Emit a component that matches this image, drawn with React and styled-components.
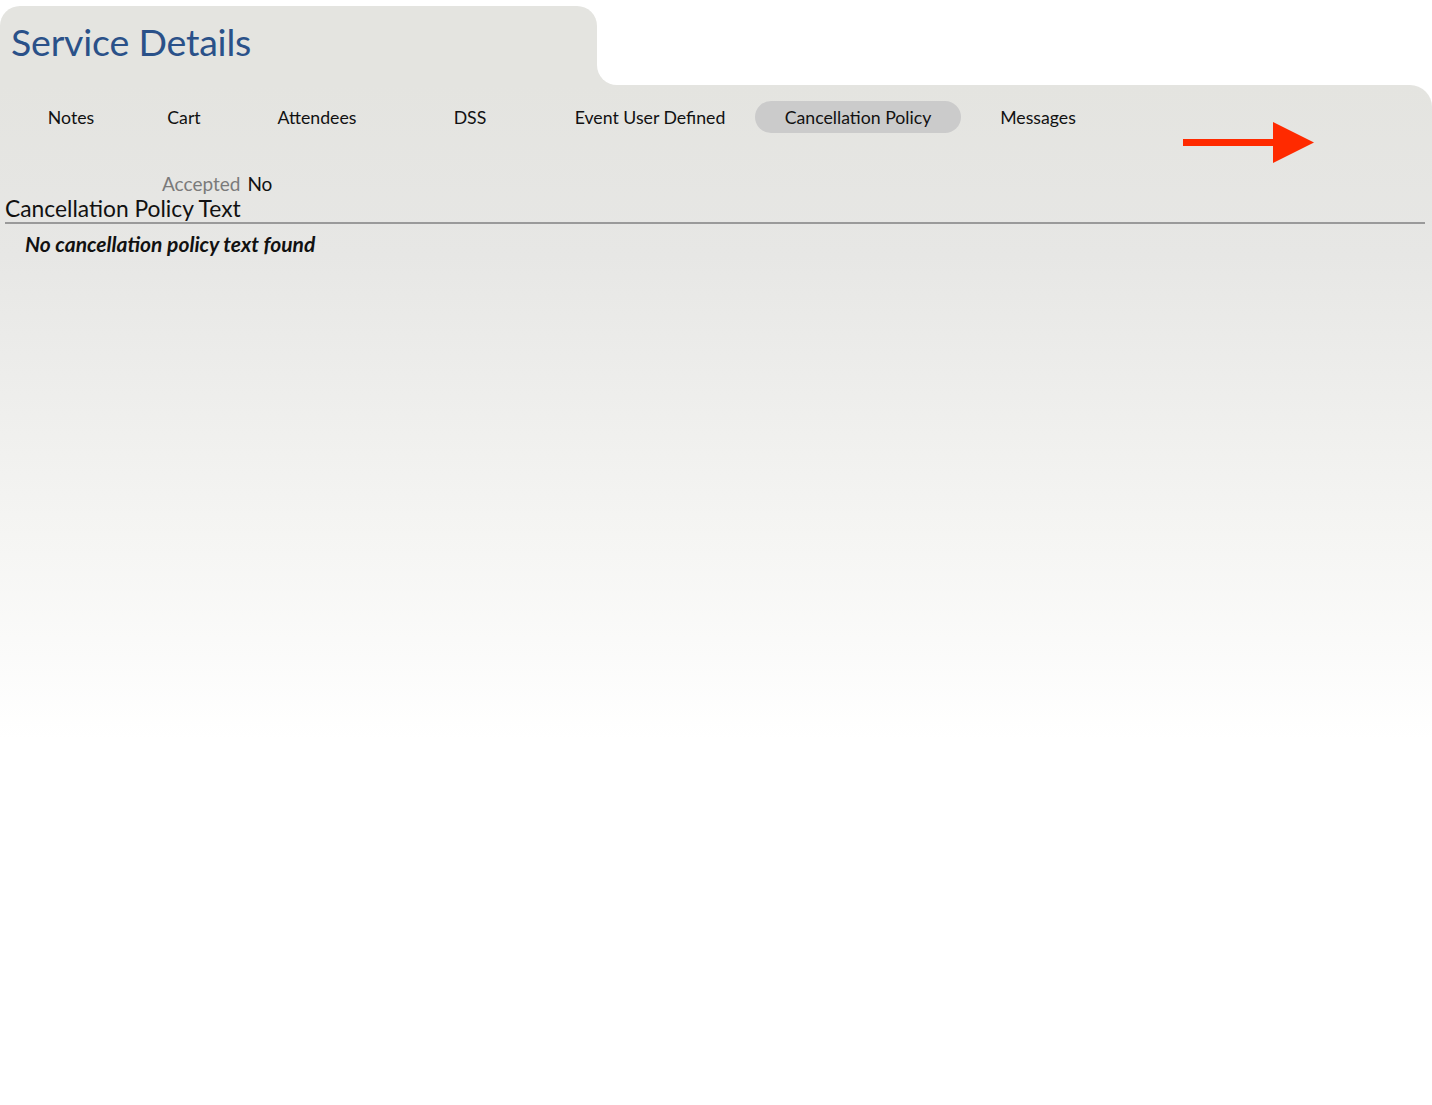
import React from "react";
import styled, { createGlobalStyle } from "styled-components";

const Global = createGlobalStyle`
  html, body { margin: 0; padding: 0; background: #fff; }
  body { font-family: Lato, "Open Sans", sans-serif; color: #111; }
`;

const Page = styled.div`
  padding-top: 6px;
  min-height: 1099px;
  display: flex;
  flex-direction: column;
`;

const HeaderRow = styled.div`
  display: flex;
  height: 79px;
`;

const HeaderTab = styled.div`
  width: 597px;
  background: #e4e4e0;
  border-radius: 20px 20px 0 0;
  padding: 13px 0 0 11px;
  box-sizing: border-box;
`;

const Title = styled.h1`
  margin: 0;
  font-family: Lato, sans-serif;
  font-weight: 400;
  font-size: 37.5px;
  line-height: 46px;
  color: #2a5189;
  letter-spacing: -0.2px;
`;

const CornerWrap = styled.div`
  flex: 1;
  background: #e4e4e0;
`;

const CornerFill = styled.div`
  height: 100%;
  background: #fff;
  border-bottom-left-radius: 20px;
`;

const Body = styled.div`
  position: relative;
  flex: 1;
  background: linear-gradient(to bottom, #e4e4e0 0px, #e7e7e5 170px, #f6f6f4 470px, #ffffff 655px);
  border-top-right-radius: 22px;
  padding: 16px 7px 0 5px;
`;

const TabBar = styled.div`
  display: flex;
  padding-left: 10px;
  height: 32px;
`;

const Tab = styled.div`
  width: ${p => p.$w}px;
  margin-left: ${p => p.$ml || 0}px;
  height: 32px;
  display: flex;
  align-items: center;
  justify-content: center;
  font-size: 17.7px;
  color: #111;
  border-radius: 16px;
  background: ${p => (p.$active ? "#cbcbcb" : "transparent")};
`;

const Arrow = styled.svg`
  position: absolute;
  left: 1183px;
  top: 37px;
`;

const Content = styled.div`
  padding-top: 39px;
`;

const FieldRow = styled.div`
  display: flex;
  align-items: baseline;
  gap: 7px;
  padding-left: 157px;
  font-size: 19px;
  line-height: 23px;
`;

const FieldLabel = styled.span`
  color: #7a7a7a;
`;

const FieldValue = styled.span`
  color: #111;
`;

const SectionTitle = styled.div`
  font-size: 22.8px;
  line-height: 27px;
  color: #111;
  border-bottom: 2px solid #9a9a9a;
  margin-top: 0;
`;

const EmptyNote = styled.div`
  font-size: 21px;
  font-weight: 700;
  font-style: italic;
  color: #111;
  padding: 8px 0 0 20px;
  line-height: 24px;
`;

const tabs = [
  { label: "Notes", w: 112 },
  { label: "Cart", w: 114 },
  { label: "Attendees", w: 152 },
  { label: "DSS", w: 154 },
  { label: "Event User Defined", w: 206 },
  { label: "Cancellation Policy", w: 206, active: true, ml: 2 },
  { label: "Messages", w: 154 },
];

export default function App() {
  return (
    <>
      <Global />
      <Page>
        <HeaderRow>
          <HeaderTab>
            <Title>Service Details</Title>
          </HeaderTab>
          <CornerWrap>
            <CornerFill />
          </CornerWrap>
        </HeaderRow>
        <Body>
          <TabBar>
            {tabs.map(t => (
              <Tab key={t.label} $w={t.w} $ml={t.ml} $active={t.active}>
                {t.label}
              </Tab>
            ))}
          </TabBar>
          <Arrow width="132" height="42" viewBox="0 0 132 42">
            <rect x="0" y="17" width="92" height="7" fill="#ff2a00" />
            <polygon points="90,0 131,20.5 90,41" fill="#ff2a00" />
          </Arrow>
          <Content>
            <FieldRow>
              <FieldLabel>Accepted</FieldLabel>
              <FieldValue>No</FieldValue>
            </FieldRow>
            <SectionTitle>Cancellation Policy Text</SectionTitle>
            <EmptyNote>No cancellation policy text found</EmptyNote>
          </Content>
        </Body>
      </Page>
    </>
  );
}
